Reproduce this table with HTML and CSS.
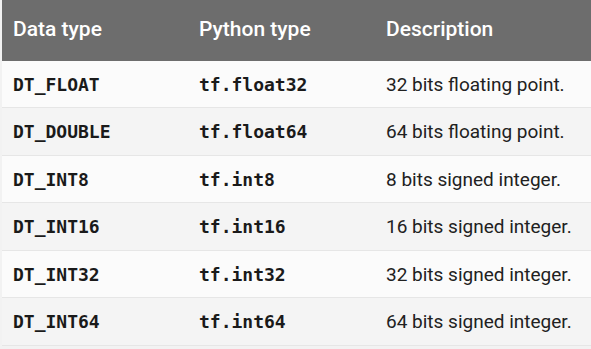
FILE: index.html
```html
<!DOCTYPE html>
<html lang="en">
<head>
    <meta charset="UTF-8">
    <title>TensorFlow data types</title>
    <link rel="stylesheet" href="styles.css">
</head>
<body>
    <table class="types-table">
        <thead>
            <tr>
                <th class="col-data">Data type</th>
                <th class="col-py">Python type</th>
                <th class="col-desc">Description</th>
            </tr>
        </thead>
        <tbody>
            <tr class="row-a">
                <td class="code">DT_FLOAT</td>
                <td class="code">tf.float32</td>
                <td>32 bits floating point.</td>
            </tr>
            <tr class="row-b">
                <td class="code">DT_DOUBLE</td>
                <td class="code">tf.float64</td>
                <td>64 bits floating point.</td>
            </tr>
            <tr class="row-a">
                <td class="code">DT_INT8</td>
                <td class="code">tf.int8</td>
                <td>8 bits signed integer.</td>
            </tr>
            <tr class="row-b">
                <td class="code">DT_INT16</td>
                <td class="code">tf.int16</td>
                <td>16 bits signed integer.</td>
            </tr>
            <tr class="row-a">
                <td class="code">DT_INT32</td>
                <td class="code">tf.int32</td>
                <td>32 bits signed integer.</td>
            </tr>
            <tr class="row-b">
                <td class="code">DT_INT64</td>
                <td class="code">tf.int64</td>
                <td>64 bits signed integer.</td>
            </tr>
        </tbody>
    </table>
</body>
</html>
```

FILE: styles.css
```css
/* General */
body {
    margin: 0;
    padding: 0 0 0 2px;
    background-color: #f2f2f2;
    font-family: Roboto, 'Noto Sans', sans-serif;
    color: #212121;
}

/* Table */
.types-table {
    width: 589px;
    border-collapse: collapse;
}

.types-table th {
    height: 57px;
    padding: 0 0 4px 11px;
    background-color: #6d6d6d;
    color: #ffffff;
    font-size: 21px;
    font-weight: 500;
    text-align: left;
}

.col-data { width: 175px; }
.col-py { width: 176px; }

.types-table td {
    padding: 0 0 0 11px;
    font-size: 19px;
    border-bottom: 1px solid #e6e6e6;
}

.row-a td { height: 46px; }
.row-b td { height: 47px; }

.types-table .code {
    font-family: 'DejaVu Sans Mono', monospace;
    font-weight: bold;
    font-size: 18px;
    color: #1a1a1a;
}

.row-a { background-color: #fbfbfb; }
.row-b { background-color: #f4f4f4; }
```
